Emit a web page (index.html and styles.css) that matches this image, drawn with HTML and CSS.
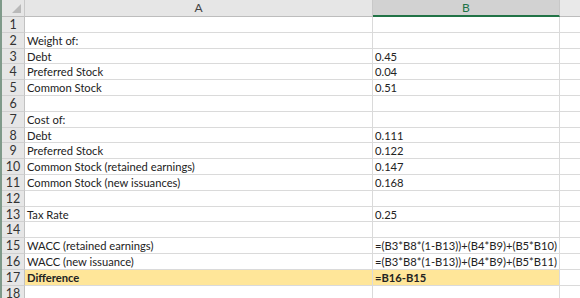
FILE: index.html
```html
<!DOCTYPE html>
<html>
<head>
  <title>WACC</title>
  <link rel="stylesheet" href="styles.css">
</head>
<body>
  <div class="sheet">
    <div class="corner"><span class="tri"></span></div>
    <div class="colhead">A</div>
    <div class="colhead sel">B</div>
    <div class="colhead rest"></div>

    <div class="rn">1</div><div class="cell"></div><div class="cell"></div><div class="cell rest"></div>
    <div class="rn">2</div><div class="cell">Weight of:</div><div class="cell"></div><div class="cell rest"></div>
    <div class="rn">3</div><div class="cell">Debt</div><div class="cell">0.45</div><div class="cell rest"></div>
    <div class="rn">4</div><div class="cell">Preferred Stock</div><div class="cell">0.04</div><div class="cell rest"></div>
    <div class="rn">5</div><div class="cell">Common Stock</div><div class="cell">0.51</div><div class="cell rest"></div>
    <div class="rn">6</div><div class="cell"></div><div class="cell"></div><div class="cell rest"></div>
    <div class="rn">7</div><div class="cell">Cost of:</div><div class="cell"></div><div class="cell rest"></div>
    <div class="rn">8</div><div class="cell">Debt</div><div class="cell">0.111</div><div class="cell rest"></div>
    <div class="rn">9</div><div class="cell">Preferred Stock</div><div class="cell">0.122</div><div class="cell rest"></div>
    <div class="rn">10</div><div class="cell">Common Stock (retained earnings)</div><div class="cell">0.147</div><div class="cell rest"></div>
    <div class="rn">11</div><div class="cell">Common Stock (new issuances)</div><div class="cell">0.168</div><div class="cell rest"></div>
    <div class="rn">12</div><div class="cell"></div><div class="cell"></div><div class="cell rest"></div>
    <div class="rn">13</div><div class="cell">Tax Rate</div><div class="cell">0.25</div><div class="cell rest"></div>
    <div class="rn">14</div><div class="cell"></div><div class="cell"></div><div class="cell rest"></div>
    <div class="rn">15</div><div class="cell">WACC (retained earnings)</div><div class="cell">=(B3*B8*(1-B13))+(B4*B9)+(B5*B10)</div><div class="cell rest"></div>
    <div class="rn">16</div><div class="cell">WACC (new issuance)</div><div class="cell">=(B3*B8*(1-B13))+(B4*B9)+(B5*B11)</div><div class="cell rest"></div>
    <div class="rn">17</div><div class="cell hl">Difference</div><div class="cell hl">=B16-B15</div><div class="cell rest"></div>
    <div class="rn">18</div><div class="cell"></div><div class="cell"></div><div class="cell rest"></div>
  </div>
</body>
</html>
```
FILE: styles.css
```css
body {
  margin: 0;
  background: #fff;
  font-family: Lato, "Open Sans", sans-serif;
  font-size: 11.2px;
  color: #222;
  border-left: 2px solid #7f9a8a;
  height: 298px;
  overflow: hidden;
}

.sheet {
  display: grid;
  grid-template-columns: 23px 348px 187px 1fr;
  grid-template-rows: 17px;
  grid-auto-rows: 15.8px;
}

.corner,
.colhead {
  background: #e6e6e6;
  border-right: 1px solid #c8c8c8;
  border-bottom: 1px solid #bdbdbd;
  position: relative;
}

.colhead {
  text-align: center;
  line-height: 16px;
  color: #444;
  font-size: 12px;
}

.colhead.sel {
  background: #d2d2d2;
  color: #217346;
  border-bottom: 2px solid #217346;
  line-height: 15px;
}

.colhead.rest {
  border-right: none;
  background: #e9e9e9;
}

.tri {
  position: absolute;
  right: 3px;
  bottom: 3px;
  width: 0;
  height: 0;
  border-left: 9px solid transparent;
  border-bottom: 9px solid #b9b9b9;
}

.rn {
  background: #e6e6e6;
  border-right: 1px solid #c2c2c2;
  border-bottom: 1px solid #d0d0d0;
  text-align: center;
  color: #333;
  font-size: 12.5px;
  line-height: 16px;
  overflow: hidden;
}

.cell {
  border-right: 1px solid #dadada;
  border-bottom: 1px solid #dadada;
  padding-left: 2px;
  line-height: 16px;
  white-space: nowrap;
  overflow: hidden;
}

.cell.rest {
  border-right: none;
}

.cell.hl {
  background: #ffe699;
  font-weight: bold;
}
```
